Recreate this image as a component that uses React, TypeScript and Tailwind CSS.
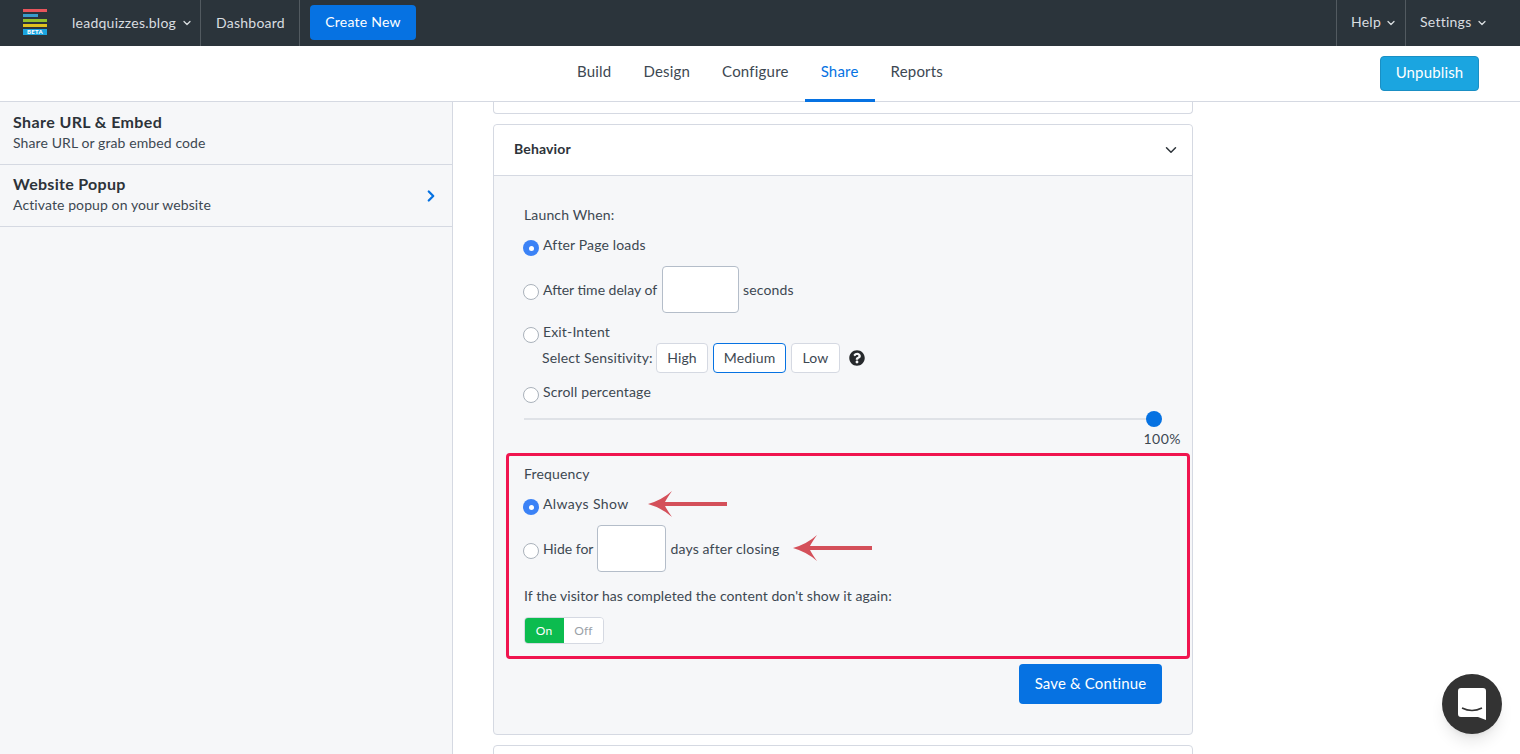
import { ChevronDown, ChevronRight } from "lucide-react";
import { FaQuestionCircle } from "react-icons/fa";

const tabs = ["Build", "Design", "Configure", "Share", "Reports"];

function Radio({ checked = false }: { checked?: boolean }) {
  if (checked) {
    return (
      <span className="flex h-4 w-4 shrink-0 items-center justify-center rounded-full bg-[#3b82f6]">
        <span className="h-[5px] w-[5px] rounded-full bg-white" />
      </span>
    );
  }
  return <span className="block h-4 w-4 shrink-0 rounded-full border border-[#aab2bb] bg-white" />;
}

function Arrow() {
  return (
    <svg width="79" height="26" viewBox="0 0 79 26" className="block">
      <path
        d="M0 13 Q14 9 24 0 Q19 7 17 11 L79 11 L79 15 L17 15 Q19 19 24 26 Q14 17 0 13 Z"
        fill="#d4505a"
      />
    </svg>
  );
}

function Logo() {
  return (
    <div className="mb-[2px] flex w-6 flex-col gap-[2px]">
      <div className="h-[3px] w-6 bg-[#e8555c]" />
      <div className="h-[3px] w-[15px] bg-[#3a9ccb]" />
      <div className="h-[3px] w-6 bg-[#93c02b]" />
      <div className="h-[3px] w-6 bg-[#e0c21f]" />
      <div className="flex h-[6px] w-6 items-center justify-center bg-[#1ba5e0] text-[6px] leading-none font-black text-white">
        BETA
      </div>
    </div>
  );
}

export default function App() {
  return (
    <div className="relative h-[754px] w-[1520px] overflow-hidden bg-white font-['Lato','Noto_Sans',sans-serif] text-[14px] tracking-[0.15px] text-[#3d4852]">
      <header className="flex h-[46px] items-stretch justify-between bg-[#2b343b] text-[14px] tracking-[0.25px] text-[#d9dde0]">
        <div className="flex items-stretch">
          <div className="flex w-[72px] items-center pl-[23px]">
            <Logo />
          </div>
          <div className="flex w-[129px] items-center border-r border-[#525a60] pb-[2px]">
            <span>leadquizzes.blog</span>
            <ChevronDown size={12} strokeWidth={2.5} className="ml-[5px] mt-[2px]" />
          </div>
          <div className="flex w-[99px] items-center border-r border-[#525a60] pb-[2px] pl-[15px]">Dashboard</div>
          <div className="flex items-center pl-[10px]">
            <button className="mb-px h-[35px] w-[106px] rounded bg-[#0672e2] pb-[2px] text-white">Create New</button>
          </div>
        </div>
        <div className="flex items-stretch">
          <div className="flex w-[70px] items-center border-x border-[#525a60] pb-[3px] pl-[14px]">
            <span>Help</span>
            <ChevronDown size={12} strokeWidth={2.5} className="ml-[4px] mt-[2px]" />
          </div>
          <div className="flex w-[114px] items-center pb-[3px] pl-[14px]">
            <span>Settings</span>
            <ChevronDown size={12} strokeWidth={2.5} className="ml-[5px] mt-[2px]" />
          </div>
        </div>
      </header>

      <nav className="relative flex h-[56px] items-stretch justify-center border-b border-[#d5d9e2] bg-white text-[15px] tracking-[0.2px]">
        <div className="-mb-px flex items-stretch">
          {tabs.map((tab) => (
            <div
              key={tab}
              className={`flex items-center border-b-[3px] px-4 pb-[3px] ${
                tab === "Share" ? "border-[#0672e2] text-[#0672e2]" : "border-transparent"
              }`}
            >
              {tab}
            </div>
          ))}
        </div>
        <button className="absolute top-[10px] right-[41px] h-[35px] w-[99px] rounded border border-[#1a8fc4] bg-[#1ba5e0] pb-[2px] tracking-[0.15px] text-white">
          Unpublish
        </button>
      </nav>

      <div className="flex h-[652px] items-stretch">
        <aside className="w-[453px] shrink-0 border-r border-[#d5d9e2] bg-[#f6f7f9]">
          <div className="h-[63px] border-b border-[#d5d9e2] px-[13px] pt-[10px]">
            <div className="text-[16px] leading-5 font-bold tracking-[0.4px] text-[#2d3339]">Share URL &amp; Embed</div>
            <div className="mt-px text-[14px] leading-5 tracking-[0.1px]">Share URL or grab embed code</div>
          </div>
          <div className="flex h-[62px] items-center justify-between border-b border-[#d5d9e2] pr-[12px] pl-[13px]">
            <div className="pb-[2px]">
              <div className="text-[16px] leading-5 font-bold tracking-[0.3px] text-[#2d3339]">Website Popup</div>
              <div className="mt-px text-[14px] leading-5 tracking-[0.1px]">Activate popup on your website</div>
            </div>
            <ChevronRight size={18} strokeWidth={3} className="text-[#0672e2]" />
          </div>
        </aside>

        <main className="ml-10 w-[700px]">
          <div className="h-[12px] rounded-b border-x border-b border-[#d5d9e2]" />
          <section className="mt-[10px] h-[611px] rounded border border-[#d5d9e2] bg-[#f6f7f9]">
            <div className="flex h-[51px] items-center justify-between rounded-t border-b border-[#d5d9e2] bg-white pr-[12px] pl-5">
              <span className="pb-[3px] font-bold text-[#2d3339]">Behavior</span>
              <ChevronDown size={18} className="text-[#2d3339]" />
            </div>

            <div className="px-[29px] pt-[29px]">
              <div className="ml-px h-5 leading-5">Launch When:</div>

              <div className="mt-[10px] flex h-5 gap-1 leading-5">
                <span className="mt-[5px]">
                  <Radio checked />
                </span>
                After Page loads
              </div>

              <div className="mt-[11px] flex h-[47px] items-center gap-1">
                <span className="mt-1">
                  <Radio />
                </span>
                <span className="w-[115px] tracking-normal">After time delay of</span>
                <div className="h-[47px] w-[77px] rounded border border-[#b4bdc9] bg-white" />
                <span>seconds</span>
              </div>

              <div className="mt-[9px] flex h-5 gap-1 leading-5">
                <span className="mt-[5px]">
                  <Radio />
                </span>
                Exit-Intent
              </div>

              <div className="mt-[1px] flex h-[30px] items-center pl-[19px]">
                <span className="w-[114px] pb-px">Select Sensitivity:</span>
                <button className="h-[30px] w-[52px] rounded-sm border border-[#d5d9e2] bg-white pb-px">High</button>
                <button className="ml-[5px] h-[30px] w-[73px] rounded-sm border border-[#0672e2] bg-white pb-px">Medium</button>
                <button className="ml-[5px] h-[30px] w-[49px] rounded-sm border border-[#d5d9e2] bg-white pb-px">Low</button>
                <FaQuestionCircle size={16} className="ml-[9px] text-[#26292c]" />
              </div>

              <div className="mt-[9px] flex h-5 gap-1 leading-5">
                <span className="mt-[5px]">
                  <Radio />
                </span>
                Scroll percentage
              </div>

              <div className="relative mt-[9px] ml-px h-4 w-[638px]">
                <div className="absolute top-[7px] right-0 left-0 h-[2px] bg-[#dfe2e7]" />
                <div className="absolute top-0 right-0 h-4 w-4 rounded-full bg-[#0672e2]" />
              </div>
              <div className="mt-[3px] h-[18px] w-[658px] text-right leading-[18px] tracking-[0.5px]">100%</div>
            </div>

            <div className="relative mt-[5px] mr-[2px] ml-[12px] h-[206px] rounded-sm border-[3px] border-[#f0154f] px-[15px] pt-[8px]">
              <div className="h-5 leading-5">Frequency</div>

              <div className="mt-[10px] -ml-px flex h-5 gap-1 leading-5 tracking-[0.4px]">
                <span className="mt-[5px]">
                  <Radio checked />
                </span>
                Always Show
              </div>

              <div className="mt-[11px] -ml-px flex h-[47px] items-center gap-1">
                <span className="mt-1">
                  <Radio />
                </span>
                <span className="tracking-normal">Hide for</span>
                <div className="h-[47px] w-[69px] rounded border border-[#b4bdc9] bg-white" />
                <span>days after closing</span>
              </div>

              <div className="mt-[14px] h-5 leading-5 tracking-[0.08px]">
                If the visitor has completed the content don't show it again:
              </div>

              <div className="mt-[11px] flex h-[27px] w-20 overflow-hidden rounded border border-[#d5d9e2] text-[12px]">
                <div className="-my-px -ml-px flex w-10 items-center justify-center bg-[#0cbc4f] text-white">On</div>
                <div className="flex flex-1 items-center justify-center bg-white text-[#9aa1a8]">Off</div>
              </div>

              <div className="absolute top-[35px] left-[139px]">
                <Arrow />
              </div>
              <div className="absolute top-[79px] left-[284px]">
                <Arrow />
              </div>
            </div>

            <div className="mt-[5px] flex justify-end pr-[30px]">
              <button className="h-10 w-[143px] rounded bg-[#0672e2] pb-px text-[15px] text-white">Save &amp; Continue</button>
            </div>
          </section>
          <div className="mt-[10px] h-5 rounded-t border border-[#d5d9e2]" />
        </main>
      </div>

      <div className="absolute top-[674px] left-[1442px] flex h-[60px] w-[60px] items-center justify-center rounded-full bg-[#333333] shadow-lg">
        <svg width="28" height="32" viewBox="0 0 28 32">
          <path
            d="M3 0 H25 Q28 0 28 3 V32 L20 29 H3 Q0 29 0 26 V3 Q0 0 3 0 Z"
            fill="#ffffff"
          />
          <path d="M4 20 Q14 25 24 20" stroke="#333333" strokeWidth="1.5" fill="none" />
        </svg>
      </div>
    </div>
  );
}
